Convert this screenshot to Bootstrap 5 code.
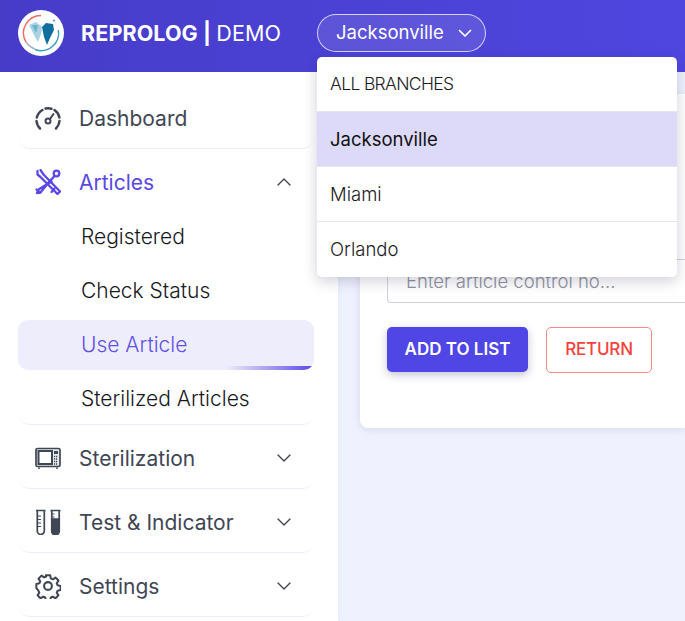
<!DOCTYPE html>
<html lang="en"><head><meta charset="utf-8"><title>Reprolog</title>
<link href="https://cdn.jsdelivr.net/npm/bootstrap@5.3.0/dist/css/bootstrap.min.css" rel="stylesheet">
<style>
html,body{height:621px;overflow:hidden}
body{font-family:Inter,"Liberation Sans",sans-serif;background:#eff2fe;color:#374151}
.topbar{height:72px;background:linear-gradient(90deg,#473cc8,#4f46e0);padding:0 0 6px 18px;position:relative;z-index:5;flex-wrap:nowrap;justify-content:flex-start}
.logo-disc{width:46px;height:46px;flex:none;margin-right:17px}
.brand-name{font-size:21.5px;font-weight:700;color:#fff;margin:0 36px 0 0;padding:0;letter-spacing:.1px;white-space:nowrap}
.brand-name span{font-weight:400}
.branch-toggle{width:169px;height:38px;border:1px solid rgba(255,255,255,.75);border-radius:19px;background:rgba(255,255,255,.1);color:#fff;font-size:18.5px;padding:0 13px 0 18px}
.branch-toggle:hover,.branch-toggle:focus{color:#fff;background:rgba(255,255,255,.1);border-color:rgba(255,255,255,.75)}
.branch-menu{width:360px;top:43px;left:0;padding:0;border:0;border-radius:5px;box-shadow:0 4px 14px rgba(40,40,80,.22);overflow:hidden}
.branch-menu .dropdown-item{height:55px;line-height:54px;padding:0 13px;font-size:18.5px;font-weight:300;color:#1b1b22;border-bottom:1px solid #e6e6ea}
.branch-menu li:last-child .dropdown-item{border-bottom:0}
.branch-menu .dropdown-item.all-caps{font-size:17.5px;letter-spacing:-.65px}
.branch-menu .dropdown-item.picked{background:#dcdaf8;font-weight:400;color:#111}
.shell{height:549px}
.side{width:338px;flex:none;background:#fff;padding:16px 24px 0 18px;box-shadow:1px 0 6px rgba(80,80,160,.05)}
.side-group{border-bottom:1px solid #eeeefb;border-radius:0 0 12px 12px;margin-bottom:3px}
.side-link{height:60px;padding:2px 22px 0 17px;font-size:21px;color:#3f4654;text-decoration:none}
.side-link svg{margin-top:-2px}
.side-link svg.ico{width:26px;height:26px;margin-right:18px;flex:none}
.side-link.open{color:#5a48e6}
.chev{width:16px;height:16px;flex:none}
.sub-item{height:50px;line-height:50px;margin-bottom:4px;padding-left:63px;font-size:21px;font-weight:300;color:#17171c;border-radius:10px;position:relative;overflow:hidden}
.sub-item:last-child{margin-bottom:0}
.sub-item.here{background:#eeedfb;color:#5f50e8}
.sub-item.here::after{content:"";position:absolute;right:0;bottom:0;width:88px;height:4px;background:linear-gradient(90deg,rgba(90,72,230,0),#5a48e6)}
.content-pane{min-width:0;padding:22px 0 0 22px}
.sheet{height:334px;background:#fff;border:0;border-radius:8px 0 0 8px;box-shadow:0 2px 8px rgba(70,70,130,.14);padding:165px 0 0 27px}
.article-input{height:44px;border-radius:4px 0 0 4px;border:1px solid #cfd1da;border-right:0;font-size:18.5px;font-weight:300;padding:0 18px}
.article-input::placeholder{color:#8e929e}
.btn-row{margin-top:24px}
.btn-add{width:141px;height:45px;background:#4f46e5;border:0;border-radius:5px;color:#fff;font-size:17px;font-weight:600;box-shadow:0 3px 8px rgba(60,60,120,.3);padding:0;margin-right:18px}
.btn-back{width:106px;height:46px;background:#fff;border:1px solid #f58a86;border-radius:5px;color:#f4433c;font-size:17px;font-weight:500;padding:0;letter-spacing:-.2px}
</style></head><body>
<nav class="navbar topbar d-flex align-items-center">
<svg class="logo-disc" viewBox="0 0 46 46"><circle cx="23" cy="23" r="23" fill="#fff"/><path d="M23 5.500A17.500 17.500 0 0 0 8 32" fill="none" stroke="#ee6a62" stroke-width="1.400"/><path d="M8 32a17.500 17.500 0 0 0 9 7" fill="none" stroke="#a9b2b6" stroke-width="1.400"/><path d="M17 39.500A17.500 17.500 0 0 0 40.300 20" fill="none" stroke="#3a9cc4" stroke-width="1.400"/><path d="M11 15l7-3 6 5-1 7-3 8-3-5z" fill="#a8d3e2"/><path d="M14 15l6 0-2 8z" fill="#6fb1cb"/><path d="M24 17l4-4 7 1 1 6-4 8-3 7-3-8z" fill="#0f6f9e"/><circle cx="36" cy="10.500" r="1" fill="#3a9cc4"/></svg>
<div class="navbar-brand brand-name">REPROLOG | <span>DEMO</span></div>
<div class="dropdown">
<button class="btn branch-toggle d-flex align-items-center justify-content-between" type="button">Jacksonville<svg width="14" height="9" viewBox="0 0 14 9"><path d="M1.500 1.500 7 7l5.500-5.500" fill="none" stroke="#fff" stroke-width="1.700" stroke-linecap="round" stroke-linejoin="round"/></svg></button>
<ul class="dropdown-menu show branch-menu">
<li><a class="dropdown-item all-caps" href="#">ALL BRANCHES</a></li>
<li><a class="dropdown-item picked" href="#">Jacksonville</a></li>
<li><a class="dropdown-item" href="#">Miami</a></li>
<li><a class="dropdown-item" href="#">Orlando</a></li>
</ul>
</div>
</nav>
<div class="d-flex shell">
<aside class="side">
<div class="side-group"><a class="side-link d-flex align-items-center" href="#">
<svg class="ico" viewBox="0 0 26 26" fill="none" stroke="#3f4654" stroke-width="2.500" stroke-linecap="round"><path d="M5 23.500A12 12 0 0 1 1.500 16"/><path d="M1.800 12.500A12 12 0 0 1 7.500 5"/><path d="M10.500 3.500A12 12 0 0 1 16.500 3.700"/><path d="M19.500 5A12 12 0 0 1 24.400 12.500"/><path d="M24.500 16a12 12 0 0 1-3.500 7.500"/><circle cx="13" cy="16" r="2.500" stroke-width="2"/><path d="M15 14 18.500 9" stroke-width="2"/></svg>Dashboard</a></div>
<div class="side-group">
<a class="side-link open d-flex align-items-center" href="#">
<svg class="ico" viewBox="0 0 26 26" fill="none" stroke="#5a48e6" stroke-width="2.300" stroke-linejoin="round" stroke-linecap="round"><path d="M2.500 2v3.500l3 2.500L22.500 25l2.500-2.500L8.500 5.500 5.500 1"/><path d="M16.500 12.500 3.500 20.500l-1.500 3.500 3.500-.5 10-12.500"/><path d="M5 23.500 1.500 20.500"/><circle cx="21.500" cy="4.500" r="2.800"/><path d="M19.500 7 15.500 11.500"/><path d="M19.500 19.500 16.500 23"/></svg>Articles<svg class="chev ms-auto" viewBox="0 0 16 16"><path d="M2 11l6-6 6 6" fill="none" stroke="#3f4654" stroke-width="1.400" stroke-linecap="round" stroke-linejoin="round"/></svg></a>
<div>
<div class="sub-item">Registered</div>
<div class="sub-item">Check Status</div>
<div class="sub-item here">Use Article</div>
<div class="sub-item">Sterilized Articles</div>
</div></div>
<div class="side-group"><a class="side-link d-flex align-items-center" href="#">
<svg class="ico" viewBox="0 0 26 26" fill="none" stroke="#3f4654" stroke-width="1.700"><rect x="1" y="3.500" width="24" height="18" rx="1.500" fill="#e8eaee"/><rect x="3.500" y="6" width="13.500" height="13" fill="#fff" stroke-width="2"/><rect x="19" y="6" width="4" height="3" fill="#3f4654" stroke="none"/><path d="M19 11.500h4M19 14h4M19 16.500h4M19 19h4" stroke-dasharray="1.200 .8" stroke-width="1.400"/><path d="M4 22.500v1.200M22 22.500v1.200" stroke-width="2"/></svg>Sterilization<svg class="chev ms-auto" viewBox="0 0 16 16"><path d="M2 5l6 6 6-6" fill="none" stroke="#3f4654" stroke-width="1.400" stroke-linecap="round" stroke-linejoin="round"/></svg></a></div>
<div class="side-group"><a class="side-link d-flex align-items-center" href="#">
<svg class="ico" viewBox="0 0 26 26" fill="none" stroke="#3f4654" stroke-width="1.700"><path d="M1 1.500h9.500M2.300 1.500v20.500a3.500 3.500 0 0 0 7 0V1.500"/><path d="M3 7h3M3 10.500h3M3 14h3M3 17.500h3" stroke-width="1.200"/><path d="M15.500 1.500h10M16.800 1.500v20.500a3.700 3.700 0 0 0 7.400 0V1.500"/><path d="M16.800 10h7.400v12a3.700 3.700 0 0 1-7.400 0z" fill="#3f4654"/><path d="M17.500 5h2M17.500 8h2" stroke-width="1.200"/></svg>Test &amp; Indicator<svg class="chev ms-auto" viewBox="0 0 16 16"><path d="M2 5l6 6 6-6" fill="none" stroke="#3f4654" stroke-width="1.400" stroke-linecap="round" stroke-linejoin="round"/></svg></a></div>
<div class="side-group"><a class="side-link d-flex align-items-center" href="#">
<svg class="ico" viewBox="0 0 26 26" fill="none" stroke="#3f4654" stroke-width="2.100" stroke-linejoin="round"><circle cx="13" cy="13" r="3.900"/><path d="M10.800 2h4.400l.7 3.200 2 .9 2.800-1.800 3.100 3.100-1.800 2.800.9 2 3.100.7v4.200l-3.100.7-.9 2 1.800 2.800-3.100 3.100-2.800-1.800-2 .9-.7 3.200h-4.400l-.7-3.200-2-.9-2.800 1.800-3.100-3.100 1.800-2.800-.9-2L1 15.100v-4.200l3.100-.7.900-2-1.800-2.800 3.100-3.100 2.800 1.800 2-.9z" transform="translate(.4 .4) scale(.97)"/></svg>Settings<svg class="chev ms-auto" viewBox="0 0 16 16"><path d="M2 5l6 6 6-6" fill="none" stroke="#3f4654" stroke-width="1.400" stroke-linecap="round" stroke-linejoin="round"/></svg></a></div>
</aside>
<main class="content-pane flex-grow-1">
<div class="card sheet">
<input class="form-control article-input" type="text" placeholder="Enter article control no...">
<div class="btn-row d-flex align-items-start">
<button class="btn btn-add" type="button">ADD TO LIST</button>
<button class="btn btn-back" type="button">RETURN</button>
</div>
</div>
</main>
</div>
<script src="https://cdn.jsdelivr.net/npm/bootstrap@5.3.0/dist/js/bootstrap.bundle.min.js"></script>
</body></html>
